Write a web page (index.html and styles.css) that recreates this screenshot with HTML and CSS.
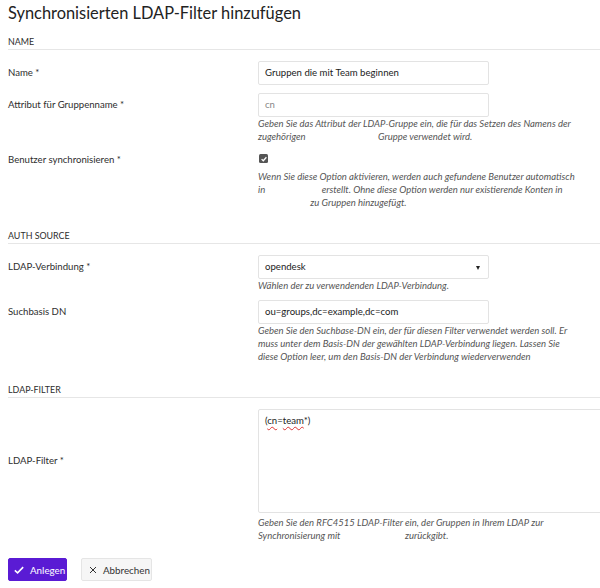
FILE: index.html
```html
<!DOCTYPE html>
<html lang="de">
<head>
<meta charset="utf-8">
<link rel="stylesheet" href="styles.css">
</head>
<body>
<h1 class="title">Synchronisierten LDAP-Filter hinzufügen</h1>

<section class="section">
  <h2 class="section-title">NAME</h2>
  <div class="row">
    <label class="label">Name *</label>
    <div class="field">
      <div class="input">Gruppen die mit Team beginnen</div>
    </div>
  </div>
  <div class="row row-tight">
    <label class="label">Attribut für Gruppenname *</label>
    <div class="field">
      <div class="input placeholder">cn</div>
      <p class="help">Geben Sie das Attribut der LDAP-Gruppe ein, die für das Setzen des Namens der<br>zugehörigen <span class="gap g1"></span> Gruppe verwendet wird.</p>
    </div>
  </div>
  <div class="row row-last">
    <label class="label">Benutzer synchronisieren *</label>
    <div class="field">
      <span class="checkbox"><svg viewBox="0 0 10 10" width="8" height="8"><path d="M2 5.2 L4.1 7.2 L8 2.8" fill="none" stroke="#fff" stroke-width="1.6"/></svg></span>
      <p class="help help-check">Wenn Sie diese Option aktivieren, werden auch gefundene Benutzer automatisch<br>in <span class="gap g2"></span> erstellt. Ohne diese Option werden nur existierende Konten in<br><span class="gap g3"></span> zu Gruppen hinzugefügt.</p>
    </div>
  </div>
</section>

<section class="section">
  <h2 class="section-title">AUTH SOURCE</h2>
  <div class="row">
    <label class="label">LDAP-Verbindung *</label>
    <div class="field">
      <div class="input select">opendesk<span class="caret"></span></div>
      <p class="help">Wählen der zu verwendenden LDAP-Verbindung.</p>
    </div>
  </div>
  <div class="row row-last">
    <label class="label">Suchbasis DN</label>
    <div class="field">
      <div class="input">ou=groups,dc=example,dc=com</div>
      <p class="help">Geben Sie den Suchbase-DN ein, der für diesen Filter verwendet werden soll. Er<br>muss unter dem Basis-DN der gewählten LDAP-Verbindung liegen. Lassen Sie<br>diese Option leer, um den Basis-DN der Verbindung wiederverwenden</p>
    </div>
  </div>
</section>

<section class="section section-filter">
  <h2 class="section-title">LDAP-FILTER</h2>
  <div class="row row-center">
    <label class="label">LDAP-Filter *</label>
    <div class="field">
      <div class="textarea">(<span class="spell">cn</span>=<span class="spell">team</span>*)</div>
    </div>
  </div>
  <div class="row row-last">
    <span class="label"></span>
    <div class="field">
      <p class="help help-wide">Geben Sie den RFC4515 LDAP-Filter ein, der Gruppen in Ihrem LDAP zur<br>Synchronisierung mit <span class="gap g4"></span> zurückgibt.</p>
    </div>
  </div>
</section>

<div class="actions">
  <button class="btn btn-primary"><svg class="btn-icon" viewBox="0 0 12 12" width="10" height="10"><path d="M1 6.4 L4.3 9.4 L11 2.6" fill="none" stroke="#fff" stroke-width="1.9"/></svg>Anlegen</button>
  <button class="btn btn-secondary"><svg class="btn-icon" viewBox="0 0 12 12" width="8" height="8"><path d="M1.5 1.5 L10.5 10.5 M10.5 1.5 L1.5 10.5" fill="none" stroke="#333" stroke-width="1.5"/></svg>Abbrechen</button>
</div>
</body>
</html>
```

FILE: styles.css
```css
* { box-sizing: border-box; }
html, body { margin: 0; padding: 0; overflow: hidden; }
body {
  font-family: Lato, "Noto Sans", sans-serif;
  font-size: 9.6px;
  color: #2e2e2e;
  background: #fff;
  padding: 0 0 0 8px;
  width: 600px;
}
.title {
  font-size: 16.4px;
  font-weight: 400;
  color: #222;
  margin: 0 0 9px 0;
  height: 26px;
  line-height: 26px;
}
.section-title {
  font-size: 8.9px;
  font-weight: 400;
  margin: 0 0 11px 0;
  padding: 0;
  border-bottom: 1px solid #e6e6e6;
  line-height: 14px;
  color: #2e2e2e;
}
.section { margin-bottom: 20px; }
.section-filter { margin-bottom: 16px; }
.row {
  display: grid;
  grid-template-columns: 250px 1fr;
  margin-bottom: 8px;
}
.row-tight { margin-bottom: 5px; }
.row-last { margin-bottom: 0; }
.row-center { align-items: center; margin-bottom: 3px; }
.label {
  padding-top: 5px;
  line-height: 14px;
}
.row-center .label { padding-top: 0; }
.input {
  width: 231px;
  height: 24px;
  border: 1px solid #e3e3e3;
  border-radius: 2px;
  padding: 0 6px;
  line-height: 22px;
  color: #222;
  position: relative;
}
.placeholder { color: #888; }
.select .caret {
  position: absolute;
  right: 8px;
  top: 10px;
  width: 0; height: 0;
  border-left: 2.5px solid transparent;
  border-right: 2.5px solid transparent;
  border-top: 4px solid #222;
}
.help {
  margin: 0;
  font-style: italic;
  font-size: 9.5px;
  line-height: 13px;
  color: #555;
  white-space: nowrap;
}
.help-check { margin-top: 7px; }
.gap { display: inline-block; }
.g1 { width: 68px; }
.g2 { width: 52px; }
.g3 { width: 50px; }
.g4 { width: 60px; }
.checkbox {
  display: flex;
  align-items: center;
  justify-content: center;
  width: 9px;
  height: 9px;
  background: #555;
  border-radius: 1.5px;
  margin: 6px 0 0 1px;
}
.textarea {
  width: 360px;
  height: 104px;
  border: 1px solid #e3e3e3;
  border-radius: 2px;
  padding: 4px 6px;
  color: #222;
  line-height: 14px;
}
.spell {
  text-decoration: underline wavy #d33;
  text-decoration-thickness: 1px;
  text-underline-offset: 2px;
}
.actions {
  display: flex;
  gap: 14px;
}
.btn {
  display: inline-flex;
  align-items: center;
  height: 23px;
  font-family: inherit;
  font-size: 9.8px;
  border-radius: 2px;
  padding: 0;
  white-space: nowrap;
}
.btn-icon { flex-shrink: 0; }
.btn-primary {
  background: #5a1bd4;
  color: #fff;
  border: 1px solid #5a1bd4;
  width: 59px;
  padding-left: 5px;
  gap: 6px;
}
.btn-secondary {
  background: #f6f6f6;
  border: 1px solid #e5e5e5;
  color: #333;
  width: 71px;
  padding-left: 7px;
  gap: 6px;
}
```
